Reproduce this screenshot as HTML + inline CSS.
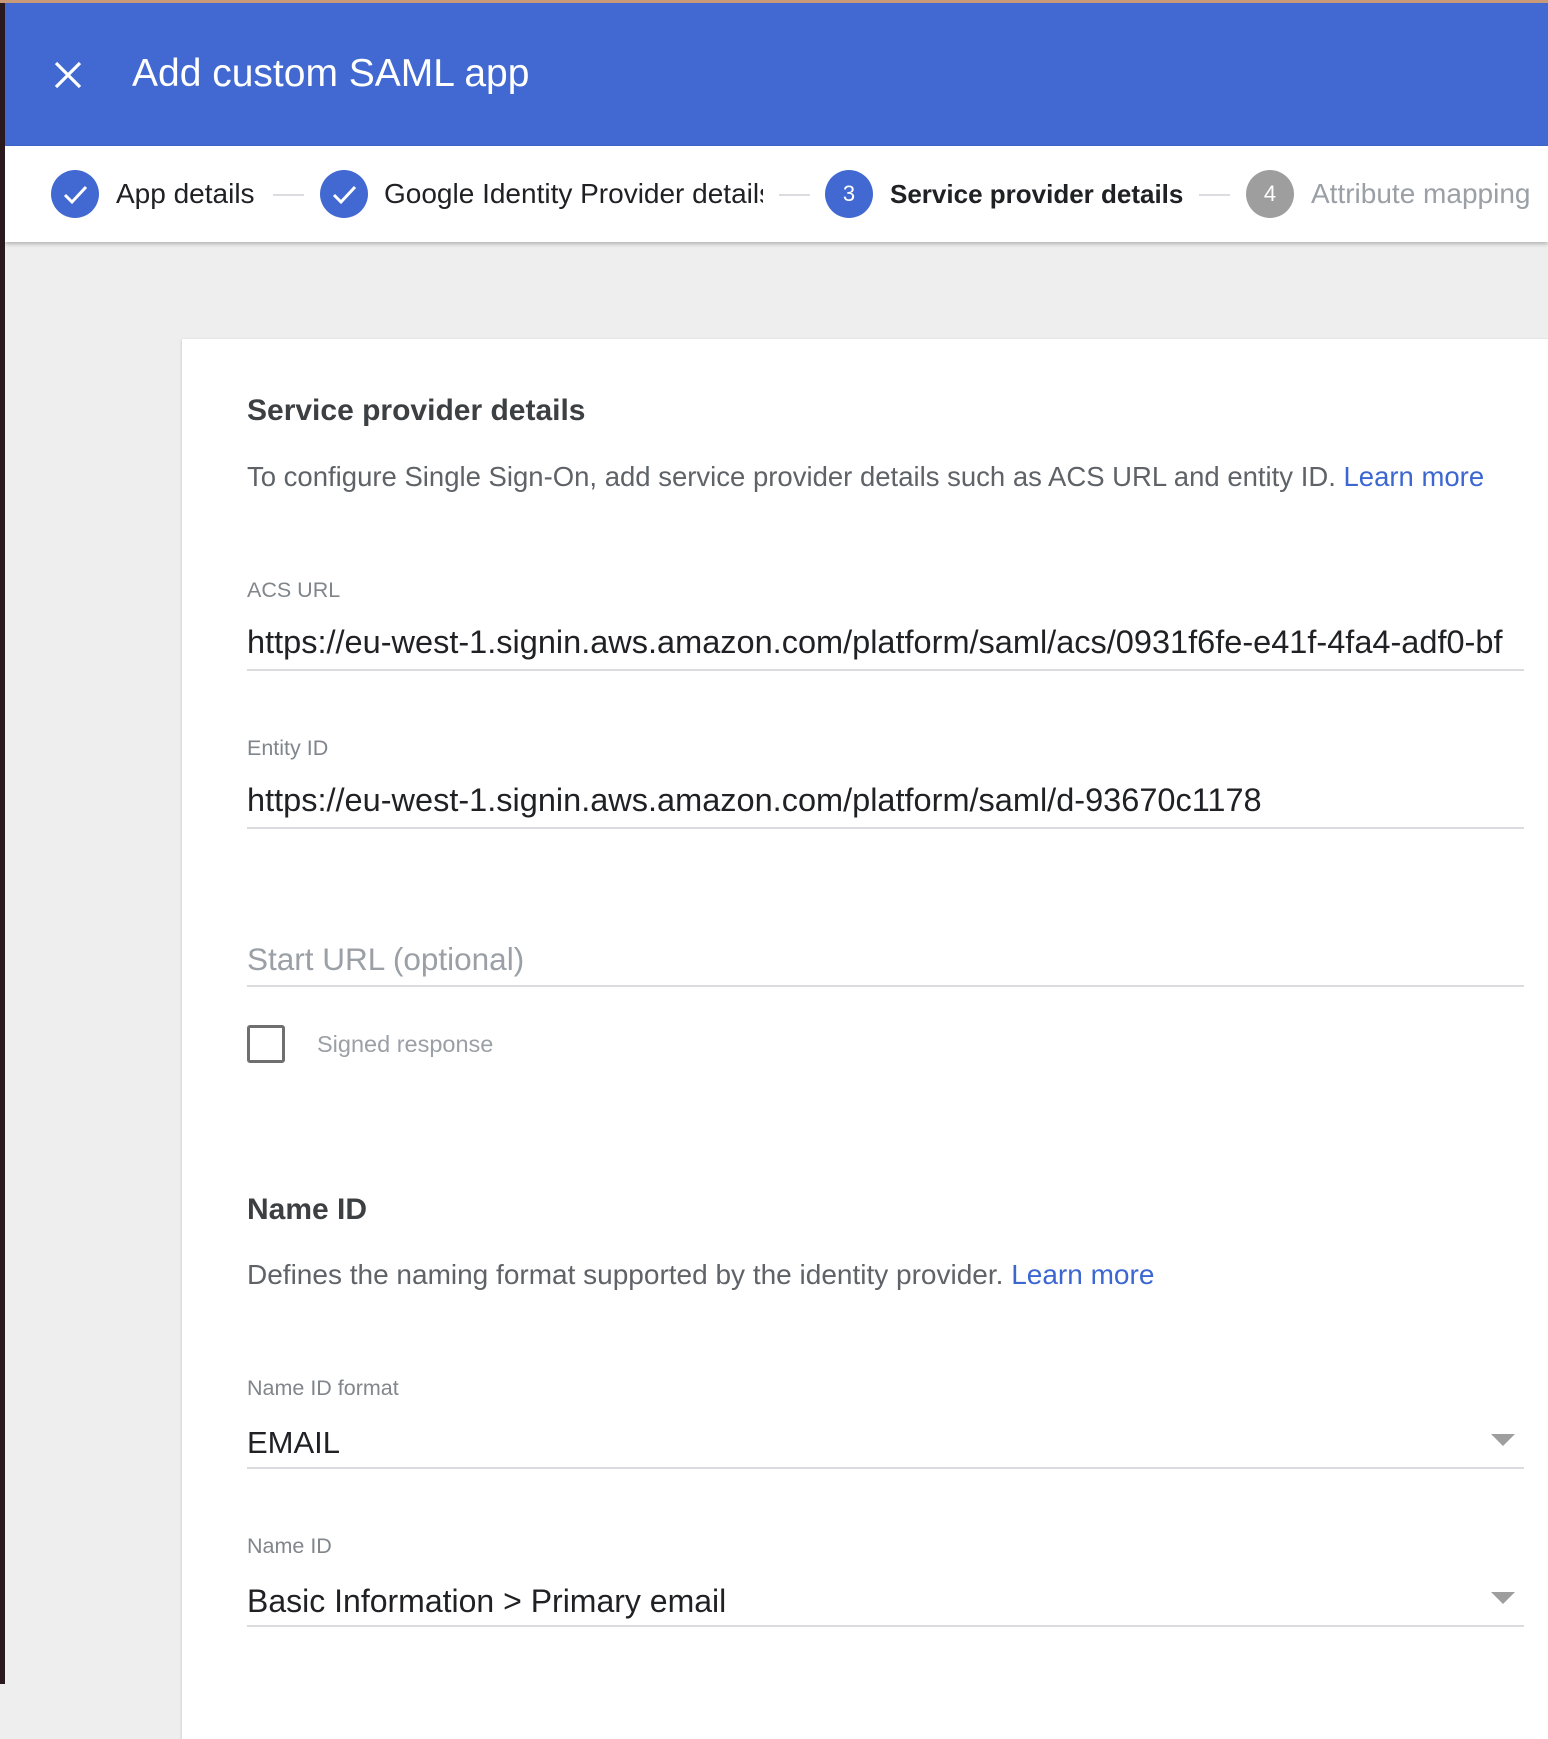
<!DOCTYPE html>
<html><head><meta charset="utf-8"><style>
*{margin:0;padding:0;box-sizing:border-box}
body{width:1548px;height:1684px;overflow:hidden;background:#eeeeee;font-family:"Liberation Sans",Arial,sans-serif;position:relative}
.a{position:absolute;white-space:nowrap}
.hdr{position:absolute;left:0;top:0;width:1548px;height:146px;background:#4169d1;border-top:3px solid #c99a7a}
.step{position:absolute;left:5px;top:146px;width:1543px;height:96px;background:#fff;box-shadow:0 2px 4px rgba(0,0,0,.25)}
.c{position:absolute;width:48px;height:48px;border-radius:50%;background:#4169d1;color:#fff;font-size:22px;text-align:center;line-height:48px;top:170px}
.st{position:absolute;top:178px;font-size:28px;line-height:32px;color:#202124;white-space:nowrap}
.ln{position:absolute;top:194px;height:2px;width:31px;background:#dadce0}
.card{position:absolute;left:182px;top:339px;width:1400px;height:1400px;background:#fff;box-shadow:0 1px 3px rgba(0,0,0,.2)}
.lbl{font-size:21.5px;color:#80868b;line-height:26px}
.val{font-size:32.5px;color:#202124;line-height:38px}
.ul{position:absolute;left:247px;width:1277px;height:2px;background:#dadce0}
.h{font-size:30px;font-weight:bold;color:#3c4043;line-height:36px}
.d{font-size:27.5px;color:#5f6368;line-height:32px}
.lk{color:#3c67d1}
.arr{position:absolute;left:1491px;width:0;height:0;border-left:12px solid transparent;border-right:12px solid transparent;border-top:12px solid #9e9e9e}
</style></head><body>
<div class="hdr"></div>
<svg class="a" style="left:54px;top:61px" width="28" height="28" viewBox="0 0 28 28"><path d="M2 2L26 26M26 2L2 26" stroke="#fff" stroke-width="3.2"/></svg>
<div class="a" style="left:132px;top:50px;font-size:39px;line-height:48px;color:#fff">Add custom SAML app</div>
<div class="step"></div>
<div class="c" style="left:51px"><svg width="48" height="48" viewBox="0 0 48 48"><path d="M14 25l7 7 14-15" fill="none" stroke="#fff" stroke-width="3"/></svg></div>
<div class="st" style="left:116px">App details</div>
<div class="ln" style="left:273px"></div>
<div class="c" style="left:320px"><svg width="48" height="48" viewBox="0 0 48 48"><path d="M14 25l7 7 14-15" fill="none" stroke="#fff" stroke-width="3"/></svg></div>
<div class="st" style="left:384px;width:379px;overflow:hidden">Google Identity Provider details</div>
<div class="ln" style="left:779px"></div>
<div class="c" style="left:825px">3</div>
<div class="st" style="left:890px;font-weight:bold;font-size:26px">Service provider details</div>
<div class="ln" style="left:1199px"></div>
<div class="c" style="left:1246px;background:#9e9e9e">4</div>
<div class="st" style="left:1311px;color:#9aa0a6">Attribute mapping</div>
<div class="card"></div>
<div class="a h" style="left:247px;top:393px">Service provider details</div>
<div class="a d" style="left:247px;top:461px">To configure Single Sign-On, add service provider details such as ACS URL and entity ID. <span class="lk">Learn more</span></div>
<div class="a lbl" style="left:247px;top:577px">ACS URL</div>
<div class="a val" style="left:247px;top:623px;width:1277px;overflow:hidden">https://eu-west-1.signin.aws.amazon.com/platform/saml/acs/0931f6fe-e41f-4fa4-adf0-bf</div>
<div class="ul" style="top:669px"></div>
<div class="a lbl" style="left:247px;top:735px">Entity ID</div>
<div class="a val" style="left:247px;top:781px">https://eu-west-1.signin.aws.amazon.com/platform/saml/d-93670c1178</div>
<div class="ul" style="top:827px"></div>
<div class="a val" style="left:247px;top:940px;color:#9aa0a6;font-size:31.5px">Start URL (optional)</div>
<div class="ul" style="top:985px"></div>
<div class="a" style="left:247px;top:1025px;width:38px;height:38px;border:3px solid #6f6f6f;border-radius:3px"></div>
<div class="a lbl" style="left:317px;top:1031px;color:#9aa0a6;font-size:23.5px">Signed response</div>
<div class="a h" style="left:247px;top:1192px">Name ID</div>
<div class="a d" style="left:247px;top:1259px;font-size:28px">Defines the naming format supported by the identity provider. <span class="lk">Learn more</span></div>
<div class="a lbl" style="left:247px;top:1375px">Name ID format</div>
<div class="a val" style="left:247px;top:1424px;font-size:31px">EMAIL</div>
<div class="arr" style="top:1434px"></div>
<div class="ul" style="top:1467px"></div>
<div class="a lbl" style="left:247px;top:1533px">Name ID</div>
<div class="a val" style="left:247px;top:1582px;font-size:32px">Basic Information &gt; Primary email</div>
<div class="arr" style="top:1592px"></div>
<div class="ul" style="top:1625px"></div>
<div class="a" style="left:0;top:3px;width:5px;height:1681px;background:#2a1a1f"></div>
</body></html>
